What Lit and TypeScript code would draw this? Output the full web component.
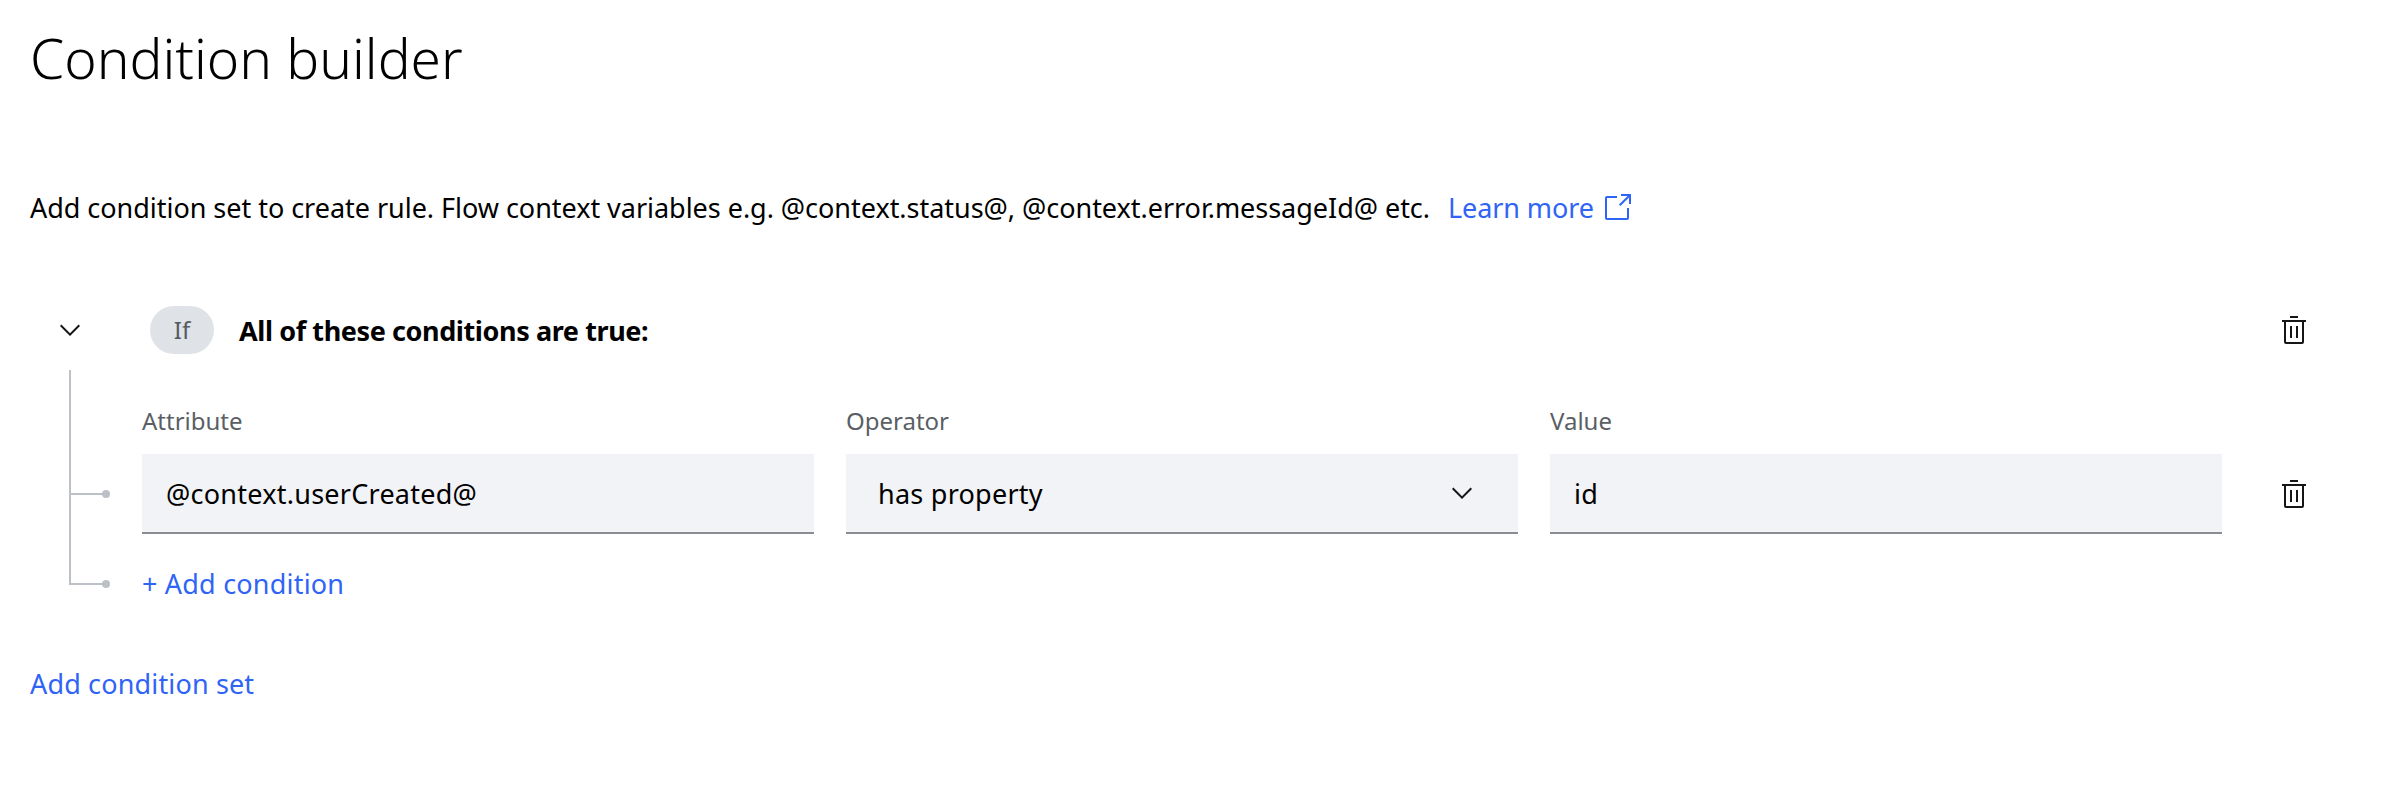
import { LitElement, html, css, svg } from 'lit';
import { customElement, property } from 'lit/decorators.js';

const trashIcon = svg`<path d="M12 12h2v12h-2zM18 12h2v12h-2zM4 6v2h2v20a2 2 0 0 0 2 2h16a2 2 0 0 0 2-2V8h2V6zm4 22V8h16v20zM12 2h8v2h-8z"/>`;
const launchIcon = svg`<path d="M26 28H6a2 2 0 0 1-2-2V6a2 2 0 0 1 2-2h10v2H6v20h20V16h2v10a2 2 0 0 1-2 2z"/><path d="M20 2v2h6.586L18 12.586 19.414 14 28 5.414V12h2V2H20z"/>`;
const chevronIcon = svg`<path d="M16 22 6 12l1.4-1.4 8.6 8.6 8.6-8.6L26 12z"/>`;

@customElement('app-root')
class AppRoot extends LitElement {
  @property({ type: Array })
  fields = [
    { label: 'Attribute', value: '@context.userCreated@', select: false },
    { label: 'Operator', value: 'has property', select: true },
    { label: 'Value', value: 'id', select: false },
  ];

  private icon(body: unknown, cls = '') {
    return html`<svg class="icon ${cls}" viewBox="0 0 32 32" width="32" height="32">${body}</svg>`;
  }

  render() {
    return html`
      <h1 class="title">Condition builder</h1>

      <p class="intro">
        <span class="intro-text">Add condition set to create rule. Flow context variables e.g. @context.status@, @context.error.messageId@ etc.</span>
        <a class="link learn">Learn more ${this.icon(launchIcon, 'launch')}</a>
      </p>

      <section class="set">
        <div class="set-head">
          ${this.icon(chevronIcon)}
          <span class="badge">If</span>
          <strong class="set-title">All of these conditions are true:</strong>
          ${this.icon(trashIcon, 'end')}
        </div>

        <div class="condition">
          <div class="rail"><i class="stub"></i><i class="dot"></i></div>
          <div class="fields">
            ${this.fields.map(f => html`
              <label class="field">
                <span class="label">${f.label}</span>
                <span class="control ${f.select ? 'select' : ''}">
                  <span>${f.value}</span>
                  ${f.select ? this.icon(chevronIcon) : ''}
                </span>
              </label>
            `)}
          </div>
          ${this.icon(trashIcon, 'row-trash')}
        </div>

        <div class="add-row">
          <div class="elbow"></div><i class="dot"></i>
          <a class="link add">+ Add condition</a>
        </div>
      </section>

      <a class="link add-set">Add condition set</a>
    `;
  }

  static styles = css`
    :host {
      display: block;
      min-height: 802px;
      padding: 0 0 0 30px;
      box-sizing: border-box;
      background: #fff;
      color: #000;
      font-family: 'Noto Sans', sans-serif;
      font-size: 27px;
    }

    .title {
      margin: 0;
      padding-top: 22px;
      font-size: 55px;
      line-height: 72px;
      font-weight: 300;
    }

    .intro {
      display: flex;
      align-items: center;
      margin: 94px 0 0;
      height: 40px;
      line-height: 40px;
    }

    .intro-text {
      letter-spacing: -0.03px;
    }

    .link {
      color: #2f64f6;
    }

    .learn {
      display: flex;
      align-items: center;
      gap: 7px;
      margin-left: 18px;
      letter-spacing: -0.1px;
    }

    .icon {
      display: block;
      flex: none;
      fill: #161616;
    }

    .launch {
      fill: #2f64f6;
    }

    .set {
      margin-top: 78px;
      padding: 0 98px 0 24px;
    }

    .set-head {
      display: flex;
      align-items: center;
      height: 48px;
    }

    .badge {
      width: 64px;
      height: 48px;
      margin-left: 64px;
      border-radius: 24px;
      background: #dfe2e6;
      color: #565b62;
      text-align: center;
      line-height: 48px;
      font-size: 24px;
    }

    .set-title {
      margin-left: 25px;
      font-weight: 700;
      letter-spacing: -0.4px;
    }

    .end {
      margin-left: auto;
    }

    .condition {
      display: flex;
      margin-top: 16px;
      padding-bottom: 30px;
    }

    .rail {
      flex: none;
      display: flex;
      align-items: flex-end;
      width: 73px;
      margin-left: 15px;
      padding-bottom: 66px;
      margin-bottom: -30px;
      border-left: 2px solid #bcc0c7;
      box-sizing: border-box;
    }

    .stub {
      width: 32px;
      height: 2px;
      margin-bottom: 3px;
      background: #bcc0c7;
    }

    .dot {
      flex: none;
      width: 8px;
      height: 8px;
      margin-left: -1px;
      border-radius: 50%;
      background: #bcc0c7;
    }

    .fields {
      flex: 1;
      display: grid;
      grid-template-columns: repeat(3, 1fr);
      gap: 32px;
      padding-top: 35px;
    }

    .field {
      display: flex;
      flex-direction: column;
      min-width: 0;
    }

    .label {
      height: 32px;
      margin-bottom: 17px;
      line-height: 32px;
      font-size: 24px;
      color: #5a5f66;
    }

    .control {
      display: flex;
      align-items: center;
      justify-content: space-between;
      height: 80px;
      padding: 0 24px;
      box-sizing: border-box;
      border-bottom: 2px solid #8a8d93;
      background: #f2f3f7;
      letter-spacing: 0.25px;
    }

    .select {
      padding: 0 40px 0 32px;
    }

    .row-trash {
      align-self: flex-end;
      margin: 0 0 24px 56px;
    }

    .add-row {
      display: flex;
      align-items: center;
      height: 40px;
      margin-left: 15px;
    }

    .elbow {
      width: 32px;
      height: 19px;
      margin-bottom: 19px;
      border-left: 2px solid #bcc0c7;
      border-bottom: 2px solid #bcc0c7;
    }

    .add {
      margin-left: 32px;
      line-height: 40px;
      letter-spacing: 0.2px;
    }

    .add-set {
      display: block;
      width: max-content;
      margin-top: 60px;
      line-height: 40px;
      letter-spacing: 0.15px;
    }
  `;
}

declare global {
  interface HTMLElementTagNameMap {
    'app-root': AppRoot;
  }
}
